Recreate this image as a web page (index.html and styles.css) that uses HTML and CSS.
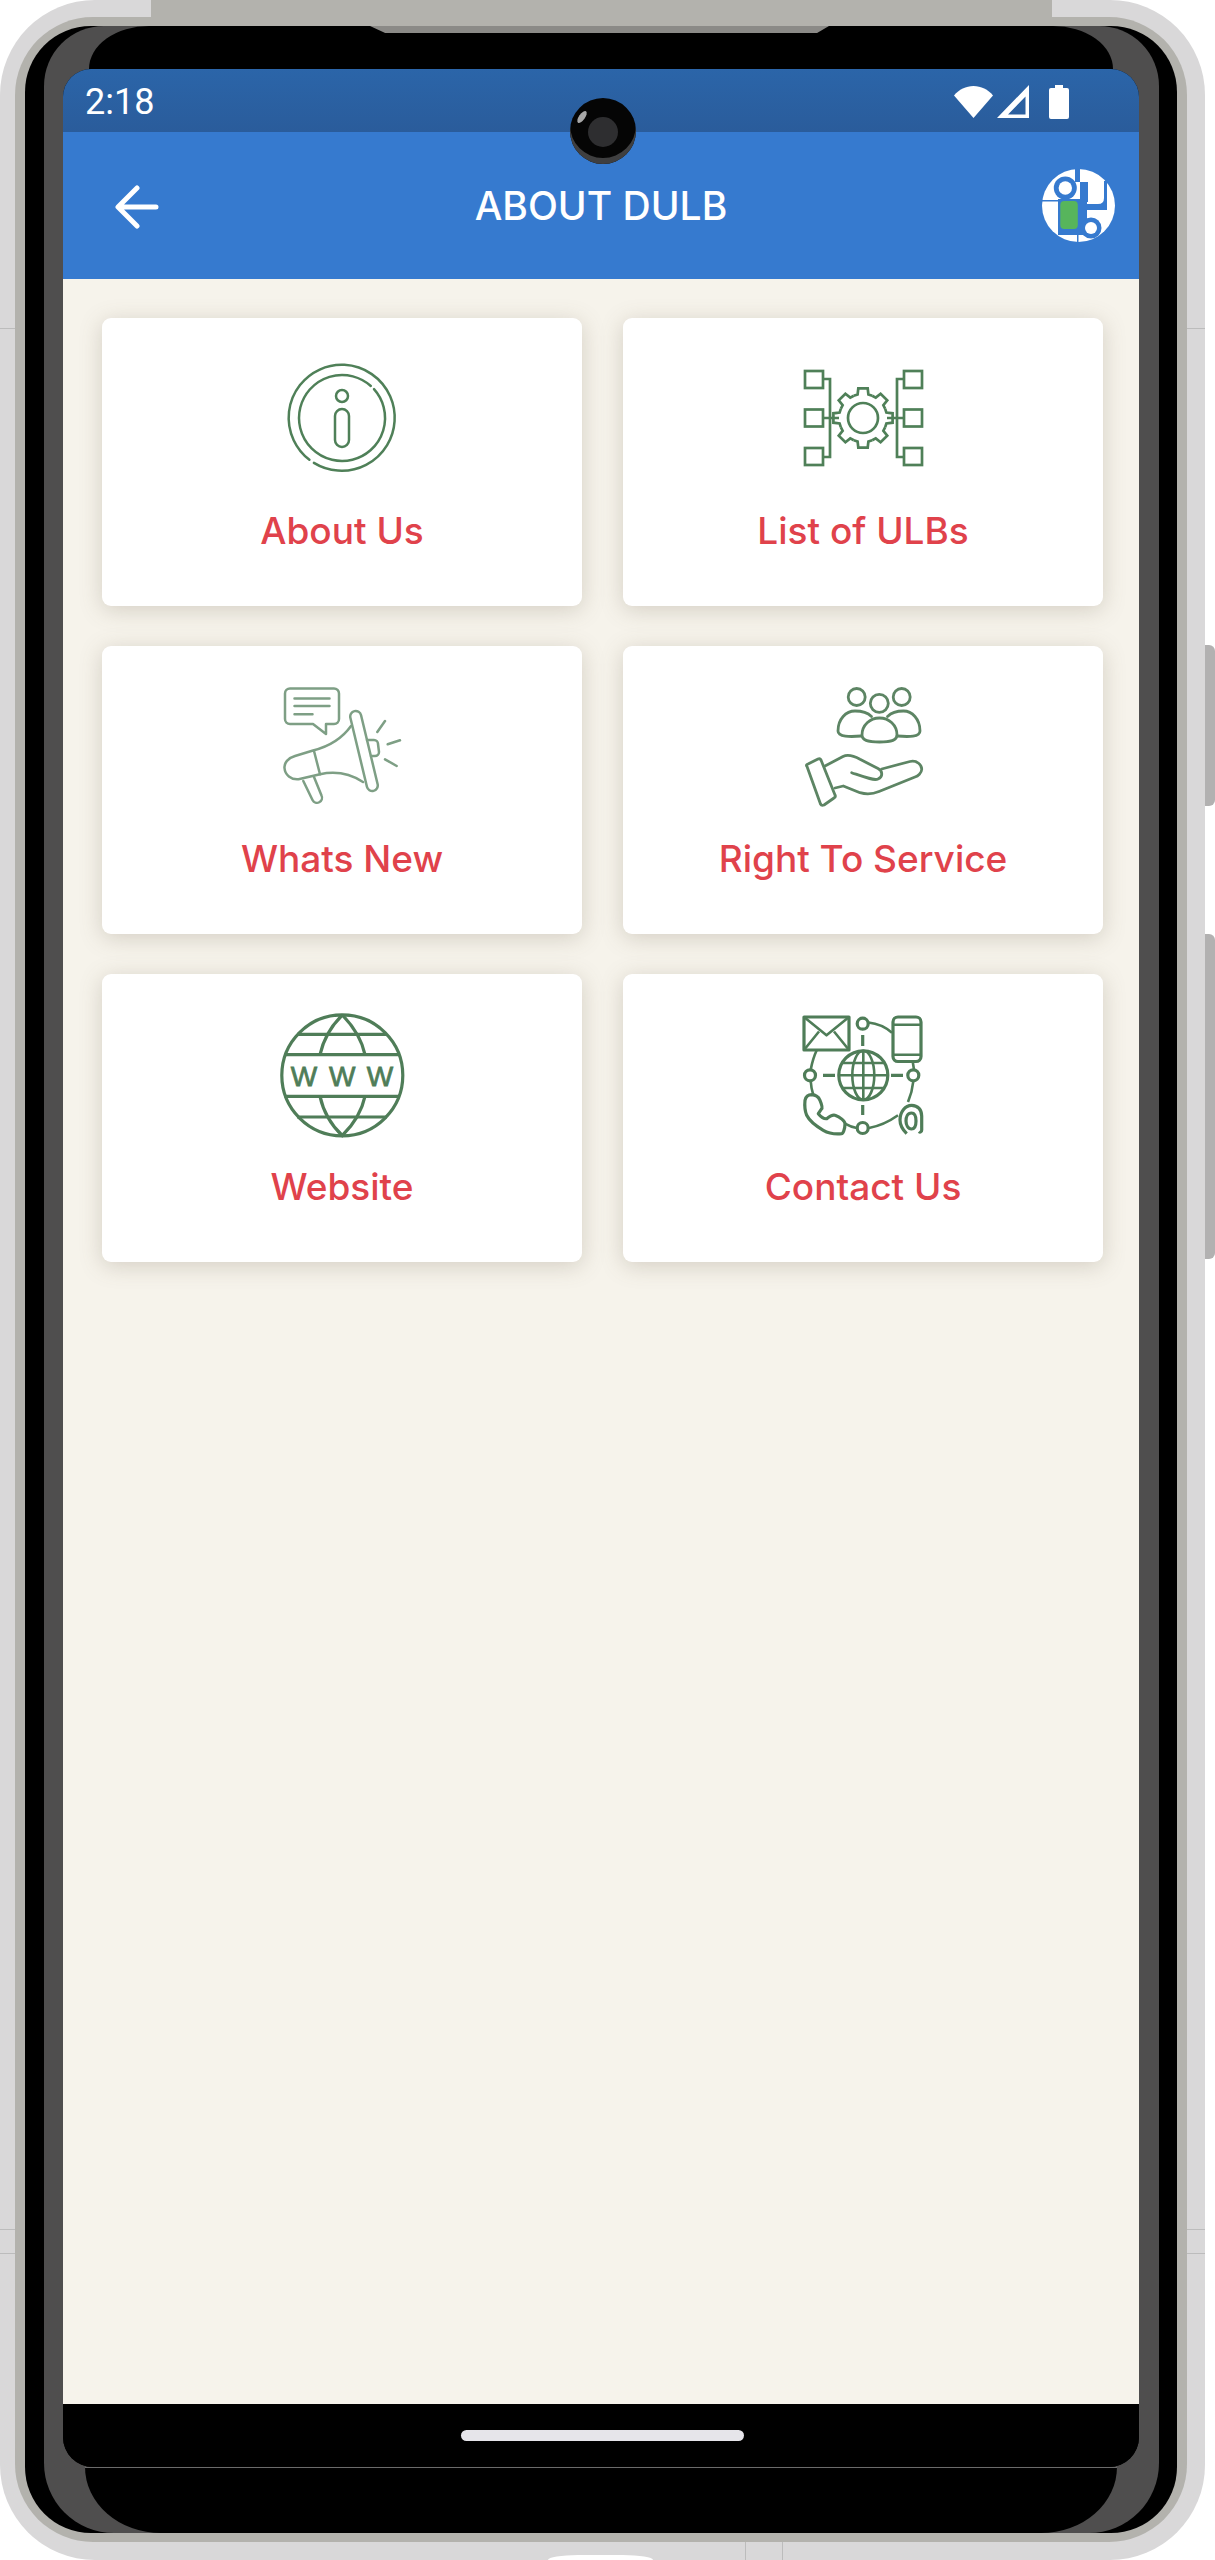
FILE: index.html
```html
<!DOCTYPE html>
<html lang="en">
<head>
  <meta charset="UTF-8">
  <meta name="viewport" content="width=device-width, initial-scale=1.0">
  <title>About DULB</title>
  <link rel="stylesheet" href="styles.css">
</head>
<body>
  <div class="phone">
    <span class="top-band"></span>
    <span class="top-notch"></span>
    <span class="side-btn side-btn-small"></span>
    <span class="side-btn side-btn-large"></span>
    <span class="seam seam-1"></span>
    <span class="seam seam-2"></span>
    <span class="seam seam-3"></span>
    <span class="seam seam-4"></span>
    <span class="seam seam-5"></span>
    <span class="seam seam-6"></span>
    <span class="usb usb-left"></span>
    <span class="usb usb-right"></span>
    <span class="bottom-cut"></span>

    <div class="ring">
      <div class="black">
        <div class="bezel">
          <div class="top-bar"></div>

          <div class="screen">
            <div class="status">
              <span class="time">2:18</span>
              <div class="status-icons">
                <svg width="39" height="32" viewBox="0 0 39 32"><path d="M0 9.5C5 3.5 12 0 19.5 0S34 3.5 39 9.5L19.5 32Z" fill="#fff"/></svg>
                <svg width="32" height="33" viewBox="0 0 32 33"><path fill-rule="evenodd" d="M0 33L32 0V33ZM11 29.5H28.5V11.5Z" fill="#fff"/></svg>
                <svg class="battery" width="20" height="34" viewBox="0 0 20 34"><path d="M6 0H14V3H18Q20 3 20 5V32Q20 34 18 34H2Q0 34 0 32V5Q0 3 2 3H6Z" fill="#fff"/></svg>
              </div>
            </div>

            <div class="appbar">
              <svg class="back" width="44" height="44" viewBox="0 0 44 44" fill="none" stroke="#fff" stroke-width="5" stroke-linecap="round" stroke-linejoin="round">
                <path d="M41 22H4M22 3L3 22L22 41"/>
              </svg>
              <h1 class="title">ABOUT DULB</h1>
              <svg class="logo" width="73" height="73" viewBox="0 0 73 73">
                <circle cx="36.500" cy="36.500" r="36.500" fill="#fff"/>
                <g fill="#367acf">
                  <rect x="33" y="0" width="5" height="13"/>
                  <rect x="0" y="31" width="18" height="1.500"/>
                  <circle cx="23.300" cy="19" r="11.500"/>
                  <rect x="16" y="30" width="29" height="36"/>
                  <rect x="38" y="13" width="8" height="20"/>
                  <path d="M62 12H65V41H42V35H56Q62 35 62 29Z"/>
                  <circle cx="49" cy="59" r="10.500"/>
                  <rect x="35" y="64" width="1.500" height="9"/>
                </g>
                <circle cx="23.300" cy="19" r="6.700" fill="#fff"/>
                <circle cx="49" cy="59" r="6" fill="#fff"/>
                <rect x="18.300" y="32" width="17.500" height="28" rx="4" fill="#57b55c"/>
              </svg>
            </div>

            <div class="grid">
              <a class="card">
                <svg class="icon" width="130" height="130" viewBox="0 0 130 130" fill="none" stroke="#4f8058" stroke-width="2.500" stroke-linecap="round">
                  <path d="M32.400 106.800A53 53 0 1 1 36.900 109.900"/>
                  <path d="M93.800 33A43 43 0 1 0 97 36.200"/>
                  <circle cx="65" cy="43" r="6"/>
                  <rect x="58" y="56" width="14" height="38" rx="7"/>
                </svg>
                <span class="label">About Us</span>
              </a>

              <a class="card">
                <svg class="icon" width="130" height="130" viewBox="0 0 130 130" fill="none" stroke="#4f8058" stroke-width="2.700">
                  <defs><path id="tooth" d="M55.800 42.800L59.600 41.600L60.300 35.400H69.700L70.400 41.600L74.200 42.800"/></defs>
                  <rect x="7" y="18" width="18" height="17"/>
                  <rect x="7" y="56.500" width="18" height="17"/>
                  <rect x="7" y="95" width="18" height="17"/>
                  <rect x="106" y="18" width="18" height="17"/>
                  <rect x="106" y="56.500" width="18" height="17"/>
                  <rect x="106" y="95" width="18" height="17"/>
                  <path d="M25 26H32V104H25M25 65H41"/>
                  <path d="M106 26H99V104H106M106 65H89"/>
                  <use href="#tooth"/>
                  <use href="#tooth" transform="rotate(45 65 65)"/>
                  <use href="#tooth" transform="rotate(90 65 65)"/>
                  <use href="#tooth" transform="rotate(135 65 65)"/>
                  <use href="#tooth" transform="rotate(180 65 65)"/>
                  <use href="#tooth" transform="rotate(225 65 65)"/>
                  <use href="#tooth" transform="rotate(270 65 65)"/>
                  <use href="#tooth" transform="rotate(315 65 65)"/>
                  <circle cx="65" cy="65" r="15"/>
                </svg>
                <span class="label">List of ULBs</span>
              </a>

              <a class="card">
                <svg class="icon" width="130" height="130" viewBox="0 0 130 130" fill="none" stroke="#7e9f85" stroke-width="2.500" stroke-linecap="round" stroke-linejoin="round">
                  <path d="M13 7.500H57A5 5 0 0 1 62 12.500V38A5 5 0 0 1 57 43H49V53L36 43H13A5 5 0 0 1 8 38V12.500A5 5 0 0 1 13 7.500Z"/>
                  <path d="M17.500 17.500H52.500M17.500 25H52.500M17.500 33.300H35.500"/>
                  <rect x="81.500" y="29" width="11" height="82" rx="5.500" transform="rotate(-13.500 87 70)"/>
                  <path d="M74 45C64 59 50 66 36 69.500L18 75C11 77 7 82 7.500 87C8 94 14 99 21.500 98.300L43 93.300C58 90 72 92 86 101"/>
                  <path d="M37 70L43 93.300"/>
                  <path d="M90 59H97A4 4 0 0 1 101 63L102 71A4 4 0 0 1 98 75H94"/>
                  <path d="M100.300 51L108 40M110.700 63.300L123 59.300M108 78.300L119.700 85"/>
                  <path d="M26.300 100L35.500 119A5 5 0 0 0 44.500 114.500L37 96"/>
                </svg>
                <span class="label">Whats New</span>
              </a>

              <a class="card">
                <svg class="icon" width="130" height="130" viewBox="0 0 130 130" fill="none" stroke="#5d8564" stroke-width="2.800" stroke-linecap="round" stroke-linejoin="round">
                  <circle cx="58.700" cy="16" r="8.500"/>
                  <circle cx="103.700" cy="16" r="8.500"/>
                  <circle cx="81.300" cy="22.300" r="9"/>
                  <path d="M63.500 55C52 56 40 56 40 50C40 38 48 30 57 30C64 30 70 32 73.500 35.500"/>
                  <path d="M99 55C111 56 122 56 122 50C122 38 114 30 105.500 30C98 30 93 32 89.500 35.500"/>
                  <path d="M64 54C64 44 72 37 81.500 37S99 44 99 54C99 59 94 61 81.500 61S64 59 64 54Z"/>
                  <path d="M9 85.500Q7.500 84 10 83L20 78Q22 77 23 79L37 114Q38 116 36 117L26 124Q23.500 125 22.500 123Z"/>
                  <path d="M27 85L45 75.500C50 73 56 75 62 78.300L80 87.500C85 90 85 96 80 98C76 100 66 96 53.700 91.700"/>
                  <path d="M83.700 88L112 80.500C119 79 124 84 123.700 88.500C123.500 92 120 95 117 96L81 110.500C74 113.500 68 113.500 62 111.700L45.300 105L37 107"/>
                </svg>
                <span class="label">Right To Service</span>
              </a>

              <a class="card">
                <svg class="icon" width="130" height="130" viewBox="0 0 130 130" fill="none" stroke="#4f7d58" stroke-width="3.200">
                  <circle cx="65.300" cy="66.300" r="60.500"/>
                  <path d="M20 25.300H110M7.500 45.700H123M7.500 87.300H123M20 108H110"/>
                  <path d="M65.300 6C52 19 46 32 43 45.700M65.300 6C78 19 85 32 88 45.700"/>
                  <path d="M43 87.300C46 101 52 114 65.300 126.500C78 114 85 101 88 87.300"/>
                  <g class="www">
                    <text x="27" y="76.500">W</text>
                    <text x="65.300" y="76.500">W</text>
                    <text x="103" y="76.500">W</text>
                  </g>
                </svg>
                <span class="label">Website</span>
              </a>

              <a class="card">
                <svg class="icon" width="130" height="130" viewBox="0 0 130 130" fill="none" stroke="#4f7d58" stroke-width="3.200" stroke-linejoin="round">
                  <rect x="6" y="8" width="45" height="33"/>
                  <path d="M6 8L28.500 26.300L51 8M6 41L21 22.500M51 41L36 22.500" stroke-width="2.600"/>
                  <rect x="95" y="8" width="28" height="44.500" rx="5"/>
                  <path d="M95 15.700H123M95 45.700H123" stroke-width="2.600"/>
                  <circle cx="65.300" cy="66.300" r="24.500"/>
                  <ellipse cx="65.300" cy="66.300" rx="11" ry="24.500" stroke-width="2.600"/>
                  <path d="M41 66.300H90M45 54H86M45 79H86M65.300 42V91" stroke-width="2.600"/>
                  <circle cx="64.700" cy="14.700" r="5.500"/>
                  <circle cx="12" cy="66.300" r="5.500"/>
                  <circle cx="115.300" cy="66.300" r="5.500"/>
                  <circle cx="64.700" cy="119" r="5.500"/>
                  <path d="M64.700 26V37M64.700 96V106M25 66.300H37M93 66.300H105"/>
                  <path d="M70.500 13.500C80 14.500 88 18.500 94 23.700M18.700 41.300C16 47 14 54 12.700 60.700M12.700 72C13 77 14 82 15.300 86M114.700 52.500L116 60.700M115.300 72.300C114.500 80 112.500 87 110 93M71 119C82 117 92 112 100 106.300M47 114.700C51 117 55 118.500 58.700 119" stroke-width="2.600"/>
                  <path d="M7 91.300C8 87 11 85.700 13.700 85.700C18 86 21 89 22 91.300C24 96 24.500 99 23.700 99.700L20.300 104.700C23 108 26 110 28.700 109.700C32 107 35 105.500 37 106.300C42 108 47 112 47 114.700C47 120 45 124.700 43.700 124.700C36 125.500 30 124 25.300 121.300C17 116.500 11 111 8.700 106.300C7 102 6.500 96 7 91.300Z"/>
                  <path d="M108.700 124.700C104 120 102 116 102 111C102 103 107 96.300 113.700 96.300C120 96.300 123.700 101 123.700 107V121C123.700 123 122 123.500 121 122.500M113.500 104C109.500 104 108 108 108 112S110 120 113.500 120S118 116 118 112S117 104 113.500 104Z"/>
                </svg>
                <span class="label">Contact Us</span>
              </a>
            </div>

            <div class="nav">
              <span class="home-bar"></span>
            </div>
          </div>

          <div class="chin"></div>
        </div>
      </div>
    </div>

    <div class="camera">
      <span class="lens"></span>
      <span class="glint"></span>
    </div>
  </div>
</body>
</html>
```

FILE: styles.css
```css
* {
  box-sizing: border-box;
  margin: 0;
  padding: 0;
}

body {
  width: 1215px;
  height: 2560px;
  overflow: hidden;
  background: #fff;
  font-family: Inter, "Liberation Sans", sans-serif;
}

/* phone body, outside in */
.phone {
  position: relative;
  width: 1205px;
  height: 2560px;
  padding: 17px 18px 18px 15px;
  background: #d9d8d9;
  border-radius: 95px;
}

.ring {
  height: 100%;
  padding: 9px 10px 9px 10px;
  background: #b3b2ad;
  border-radius: 78px;
}

.black {
  height: 100%;
  padding: 0 18px 0 19px;
  background: #000;
  border-radius: 66px;
}

.bezel {
  display: flex;
  flex-direction: column;
  height: 100%;
  padding: 0 20px 0 19px;
  background: #4f4e4e;
  border-radius: 60px 60px 70px 70px;
}

.top-bar {
  height: 43px;
  margin: 0 26px;
  background: #000;
  border-radius: 60px 60px 0 0 / 43px 43px 0 0;
}

.chin {
  height: 66px;
  margin: 0 22px;
  background: #000;
  border-top: 1px solid #6a6a6a;
  border-radius: 0 0 76px 76px / 0 0 66px 66px;
}

.screen {
  display: flex;
  flex-direction: column;
  flex: 1;
  overflow: hidden;
  border-radius: 28px 28px 30px 30px;
  background: #000;
}

.status {
  display: flex;
  align-items: center;
  justify-content: space-between;
  height: 63px;
  padding: 2px 70px 0 22px;
  background: linear-gradient(180deg, #2b65a9, #2a5c9b);
  color: #fff;
}

.time {
  font-family: Roboto, sans-serif;
  font-size: 36px;
}

.status-icons {
  display: flex;
  align-items: center;
  gap: 4px;
}

.battery {
  margin-left: 16px;
}

.appbar {
  display: grid;
  grid-template-columns: 1fr auto 1fr;
  align-items: center;
  height: 147px;
  padding: 0 37px;
  background: #367acf;
}

.title {
  font-size: 39px;
  font-weight: 500;
  color: #fff;
}

.back {
  justify-self: start;
  margin: 3px 0 0 15px;
}

.logo {
  justify-self: end;
  margin-right: -13px;
}

.grid {
  display: grid;
  flex: 1;
  grid-template-columns: 480px 480px;
  grid-auto-rows: 288px;
  align-content: start;
  gap: 40px 41px;
  padding: 39px 36px 0 39px;
  background: #f6f3eb;
}

.card {
  display: flex;
  flex-direction: column;
  align-items: center;
  padding-top: 35px;
  background: #fff;
  border-radius: 9px;
  box-shadow: 0 4px 22px rgba(110, 100, 80, 0.25);
}

.icon {
  display: block;
}

.www text {
  fill: #4f7d58;
  stroke: #4f7d58;
  stroke-width: 0.8;
  font-family: "Liberation Sans", sans-serif;
  font-size: 28px;
  text-anchor: middle;
}

.label {
  margin-top: 26px;
  font-size: 37px;
  line-height: 44px;
  font-weight: 500;
  color: #e0424b;
}

.nav {
  display: flex;
  justify-content: center;
  height: 63px;
  padding-top: 26px;
  background: #000;
}

.home-bar {
  width: 283px;
  height: 11px;
  margin-left: 3px;
  background: #e6e5ea;
  border-radius: 6px;
}

/* hardware bits that sit over the frame */
.top-band {
  position: absolute;
  top: 0;
  left: 151px;
  width: 901px;
  height: 26px;
  background: #b3b2ad;
}

.top-notch {
  position: absolute;
  top: 26px;
  left: 370px;
  width: 459px;
  height: 7px;
  background: #8b8a87;
  clip-path: polygon(0 0, 100% 0, 97.400% 100%, 3.300% 100%);
}

.side-btn {
  position: absolute;
  left: 1205px;
  width: 10px;
  background: #b2b1b1;
  border-radius: 0 6px 6px 0;
}

.side-btn-small {
  top: 645px;
  height: 161px;
}

.side-btn-large {
  top: 934px;
  height: 325px;
}

.seam {
  position: absolute;
  width: 15px;
  height: 1px;
  background: #bcbcbc;
}

.seam-1 { top: 328px; left: 0; }
.seam-2 { top: 2229px; left: 0; }
.seam-3 { top: 2253px; left: 0; }
.seam-4 { top: 328px; left: 1187px; width: 18px; }
.seam-5 { top: 2229px; left: 1187px; width: 18px; }
.seam-6 { top: 2253px; left: 1187px; width: 18px; }

.usb {
  position: absolute;
  top: 2542px;
  width: 1px;
  height: 18px;
  background: #bcbcbc;
}

.usb-left { left: 745px; }
.usb-right { left: 782px; }

.bottom-cut {
  position: absolute;
  left: 548px;
  bottom: 0;
  width: 105px;
  height: 5px;
  background: #fff;
  border-radius: 30px 30px 0 0 / 5px 5px 0 0;
}

.camera {
  position: absolute;
  top: 98px;
  left: 570px;
  width: 66px;
  height: 66px;
  background: #050505;
  border-radius: 50%;
  box-shadow: inset 0 -6px 0 #3f3f40;
}

.lens {
  position: absolute;
  top: 19px;
  left: 18px;
  width: 30px;
  height: 30px;
  background: #2e2e30;
  border-radius: 50%;
}

.glint {
  position: absolute;
  top: 12px;
  left: 9px;
  width: 6px;
  height: 14px;
  background: #a8a8a8;
  border-radius: 50%;
  transform: rotate(35deg);
}
```
